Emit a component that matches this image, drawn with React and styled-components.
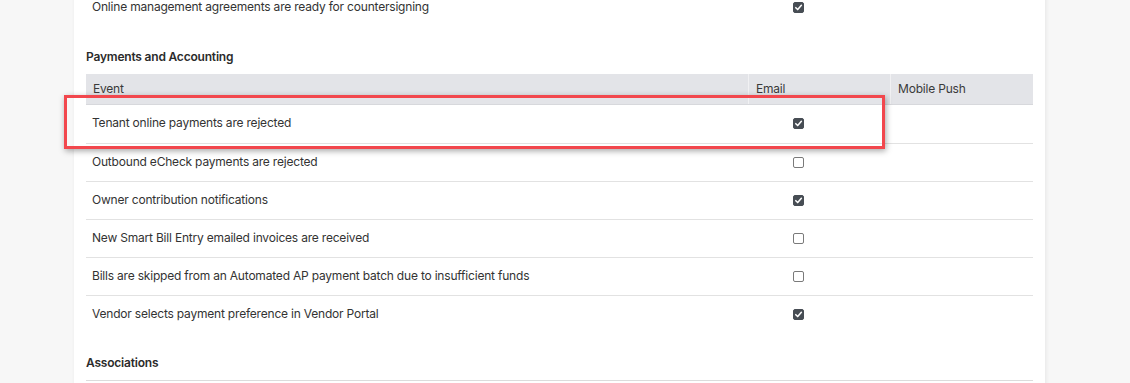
import React from "react";
import styled, { createGlobalStyle } from "styled-components";

const GlobalStyle = createGlobalStyle`
  body {
    margin: 0;
    background: #f7f7f7;
    font-family: Inter, "Noto Sans", sans-serif;
    color: #333;
    overflow: hidden;
  }
`;

const paymentRows = [
  { event: "Tenant online payments are rejected", email: true },
  { event: "Outbound eCheck payments are rejected", email: false },
  { event: "Owner contribution notifications", email: true },
  { event: "New Smart Bill Entry emailed invoices are received", email: false },
  {
    event: "Bills are skipped from an Automated AP payment batch due to insufficient funds",
    email: false,
  },
  { event: "Vendor selects payment preference in Vendor Portal", email: true },
];

const CheckIcon = () => (
  <svg width="9" height="9" viewBox="0 0 10 10">
    <path
      d="M2 5.2 L4.1 7.3 L8.2 2.6"
      fill="none"
      stroke="#fff"
      strokeWidth="1.7"
      strokeLinecap="round"
      strokeLinejoin="round"
    />
  </svg>
);

const Checkbox = ({ checked }) => (
  <Box $checked={checked}>{checked && <CheckIcon />}</Box>
);

const Row = ({ event, email, first }) => (
  <BodyRow $first={first}>
    <EventCell>{event}</EventCell>
    <EmailCell>
      <Checkbox checked={email} />
    </EmailCell>
    <PushCell />
  </BodyRow>
);

const App = () => {
  return (
    <>
      <GlobalStyle />
      <Page>
        <Card>
          <Table $offset>
            <Row
              first
              event="Online management agreements are ready for countersigning"
              email
            />
          </Table>

          <SectionTitle>Payments and Accounting</SectionTitle>
          <Table>
            <HeadRow>
              <HeadCell>Event</HeadCell>
              <HeadCell>Email</HeadCell>
              <HeadCell>Mobile Push</HeadCell>
            </HeadRow>
            {paymentRows.map((r, i) => (
              <Row key={r.event} event={r.event} email={r.email} first={i === 0} />
            ))}
            <Highlight />
          </Table>

          <SectionTitle>Associations</SectionTitle>
          <NextTable />
        </Card>
      </Page>
    </>
  );
};

const Page = styled.div`
  height: 383px;
  padding-left: 74px;
  overflow: hidden;
`;

const Card = styled.div`
  width: 971px;
  min-height: 420px;
  background: #fff;
  box-shadow: 1px 0 4px rgba(0, 0, 0, 0.07);
  padding: 0 12px;
  box-sizing: border-box;
`;

const Table = styled.div`
  position: relative;
  margin-top: ${(p) => (p.$offset ? "-11px" : "0")};
`;

const columns = "662px 142px 1fr";

const HeadRow = styled.div`
  display: grid;
  grid-template-columns: ${columns};
  height: 31px;
  background: #e3e4e8;
  border-bottom: 1px solid #d7d8dc;
  box-sizing: border-box;
`;

const HeadCell = styled.div`
  display: flex;
  align-items: flex-end;
  padding: 0 7px 8px;
  font-size: 12px;
  letter-spacing: -0.2px;
  color: #3a3a3a;
  border-left: 1px solid #f1f1f3;
  &:first-child {
    border-left: none;
  }
`;

const BodyRow = styled.div`
  display: grid;
  grid-template-columns: ${columns};
  height: 38px;
  box-sizing: border-box;
  border-top: ${(p) => (p.$first ? "none" : "1px solid #e2e2e2")};
  align-items: center;
`;

const EventCell = styled.div`
  padding: 0 0 3px 6px;
  font-size: 12px;
  letter-spacing: -0.2px;
  color: #333;
  white-space: nowrap;
`;

const EmailCell = styled.div`
  display: flex;
  padding: 0 0 1px 45px;
`;

const PushCell = styled.div``;

const Box = styled.span`
  width: 11px;
  height: 11px;
  box-sizing: border-box;
  border-radius: 2px;
  display: inline-flex;
  align-items: center;
  justify-content: center;
  background: ${(p) => (p.$checked ? "#474d54" : "#fff")};
  border: 1px solid ${(p) => (p.$checked ? "#474d54" : "#7a7a7a")};
`;

const SectionTitle = styled.div`
  padding-top: 21px;
  margin-bottom: 8px;
  line-height: 18px;
  font-size: 12px;
  letter-spacing: -0.2px;
  font-weight: 600;
  color: #2b2b2b;
`;

const NextTable = styled.div`
  margin-top: 2px;
  border-top: 1px solid #dcdcdc;
  height: 30px;
`;

const Highlight = styled.div`
  position: absolute;
  left: -22px;
  top: 21px;
  width: 821px;
  height: 54px;
  box-sizing: border-box;
  border: 3px solid #f2474d;
  box-shadow: 1px 2px 6px rgba(0, 0, 0, 0.35);
  pointer-events: none;
`;

export default App;
